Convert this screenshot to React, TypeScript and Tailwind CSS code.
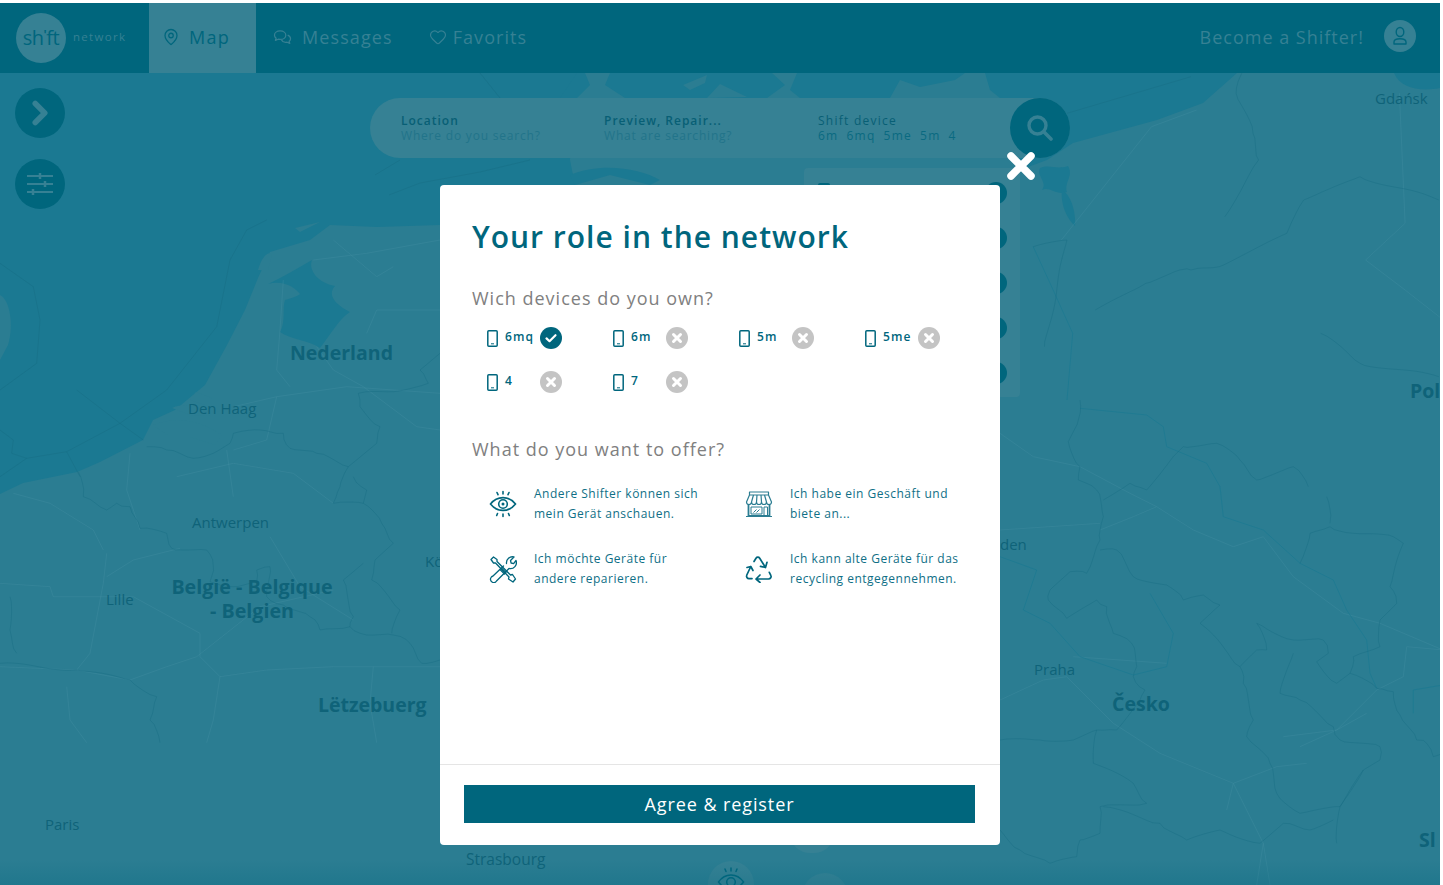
import { Heart, MapPin, ChevronRight } from "lucide-react";

const mapLabels = [
  { text: "Gdańsk", cls: "left-[1375px] top-[14px] text-[15px] font-medium" },
  { text: "Nederland", cls: "left-[290px] top-[265px] text-[19.500px] font-bold" },
  { text: "Den Haag", cls: "left-[188px] top-[324px] text-[15px]" },
  { text: "Antwerpen", cls: "left-[192px] top-[438px] text-[15px]" },
  { text: "Kö", cls: "left-[425px] top-[477px] text-[15px]" },
  { text: "Lille", cls: "left-[106px] top-[515px] text-[15px]" },
  { text: "Lëtzebuerg", cls: "left-[318px] top-[617px] text-[19.500px] font-bold" },
  { text: "Paris", cls: "left-[45px] top-[740px] text-[15px]" },
  { text: "Strasbourg", cls: "left-[466px] top-[775px] text-[15.500px]" },
  { text: "den", cls: "left-[1000px] top-[460px] text-[15px]" },
  { text: "Praha", cls: "left-[1034px] top-[585px] text-[15px]" },
  { text: "Česko", cls: "left-[1112px] top-[616px] text-[19.500px] font-bold" },
  { text: "Pol", cls: "left-[1410px] top-[303px] text-[19.500px] font-bold" },
  { text: "Sl", cls: "left-[1419px] top-[752px] text-[19.500px] font-bold" },
];

type Pt = number[];

// coordinates read off the 3x crops, converted back to page pixels
const west = (p: Pt[]) => p.map(([x, y]) => [x / 3, y / 3 + 220]);
const east = (p: Pt[]) => p.map(([x, y]) => [x / 3 + 1000, y / 3 + 400]);
const north = (p: Pt[]) => p.map(([x, y]) => [x / 1.775 + 560, y / 3]);

const line = (p: Pt[]) => "M" + p.map(([x, y]) => `${x.toFixed(1)} ${y.toFixed(1)}`).join("L");

// small fixed wobble so that borders look hand-traced and not straight
function jagged(p: Pt[]) {
  const out: Pt[] = [];
  let n = 0;
  for (let i = 0; i < p.length - 1; i++) {
    const [x1, y1] = p[i];
    const [x2, y2] = p[i + 1];
    const steps = Math.max(1, Math.round(Math.hypot(x2 - x1, y2 - y1) / 6));
    for (let s = 0; s < steps; s++) {
      const t = s / steps;
      n++;
      const off = s === 0 ? 0 : Math.sin(n * 12.9898) * 1.6;
      out.push([x1 + (x2 - x1) * t + off, y1 + (y2 - y1) * t - off * 0.8]);
    }
  }
  out.push(p[p.length - 1]);
  return line(out);
}

const borders = [
  west([[235,755],[250,830],[320,870],[350,850],[390,860],[420,925],[500,940],[515,985],[620,990],[640,1040],[630,1085],[700,1100],[770,1085],[770,1050],[810,1040],[800,1130],[850,1155],[930,1190],[960,1230],[1050,1220],[1100,1245],[1180,1245],[1230,1270],[1265,1330],[1320,1320]]),
  west([[440,680],[500,690],[580,715],[640,700],[690,670],[700,640],[780,630],[850,640],[870,685],[950,700],[1045,740],[1020,800],[1000,850],[1090,850],[1100,810],[1060,770]]),
  west([[1045,740],[1130,670],[1140,620],[1080,560],[1075,520],[1180,515],[1285,490],[1260,450],[1320,400]]),
  west([[1090,850],[1145,910],[1180,970],[1125,1020],[1115,1080],[1200,1170],[1175,1240]]),
  west([[1090,1030],[1030,1080],[1060,1190],[1050,1220]]),
  west([[0,1330],[230,1350],[390,1380],[470,1430],[450,1500],[480,1568]]),
  west([[30,1130],[30,1230],[50,1300]]),
  east([[240,0],[235,60],[205,125],[240,200],[235,240],[290,270],[310,350],[300,420],[260,520],[210,515],[150,570],[145,600],[200,655],[290,600],[320,620],[340,700],[395,730],[410,800],[400,830],[435,870],[420,900],[350,990],[290,990],[280,1090],[400,1150],[440,1210],[300,1220],[300,1300],[240,1320],[230,1370],[150,1390],[60,1350],[0,1290]]),
  east([[300,450],[350,450],[400,530],[500,555],[550,600],[610,585],[660,615],[600,670],[720,800],[770,750],[800,750],[770,670],[880,720],[970,720],[985,760],[950,785],[1010,850],[1050,820],[1130,865],[1180,875],[1200,945],[1250,1020],[1280,1030],[1300,1070],[1329,1060]]),
  east([[720,800],[730,850],[760,960],[740,1010],[770,1040],[810,1090],[830,1180],[900,1240],[1020,1220],[1090,1110],[1140,1080],[1140,1040],[1020,1020],[1000,980],[900,900],[840,880],[880,760]]),
  east([[900,490],[930,400],[990,380],[1060,400],[1180,410],[1210,430],[1170,560],[1190,610],[1140,660],[1140,740],[1060,770],[1050,820]]),
  east([[980,290],[990,370]]),
  east([[925,260],[880,200],[770,240],[720,180],[650,130],[550,140],[520,170],[440,270],[390,250],[310,300]]),
  east([[0,1020],[120,1020],[220,1020],[290,990]]),
  east([[310,1220],[480,1270],[560,1320],[660,1290],[780,1330],[850,1270],[930,1290],[1000,1260]]),
  east([[1090,1110],[1020,1220],[1010,1330]]),
  north([[1180,650],[1240,480],[1230,400],[1200,280],[1210,220]]),
  north([[950,930],[1040,850],[1100,810],[1120,810],[1170,800],[1290,700],[1320,600],[1420,530],[1560,600]]),
  north([[1350,1000],[1420,1090],[1560,1130]]),
  north([[840,740],[900,720],[860,1040]]),
];

// dark lines across the sea and the big rivers
const seaLines = [
  west([[0,510],[110,430],[120,300],[100,200],[0,130]]),
  west([[0,770],[80,715],[200,695],[360,610],[500,510],[650,320],[690,120],[740,30],[800,0]]),
  west([[230,510],[360,610],[430,660]]),
  west([[200,695],[240,770]]),
  west([[0,630],[40,660],[35,700],[80,715]]),
  north([[1120,230],[900,340]]),
  [[389,195],[420,183],[480,172],[530,160]],
  [[480,73],[500,98]],
  [[375,175],[400,160]],
];
const rivers = [
  east([[240,25],[440,45],[490,80],[500,140],[620,190],[660,260],[670,350],[790,390],[900,490],[1000,540],[1040,630],[1100,720],[1110,820],[1130,865]]),
  east([[450,580],[520,700],[500,800],[400,825],[240,770],[150,670],[70,630],[110,510],[0,470]]),
  east([[1240,940],[1240,870],[1329,855]]),
  north([[840,740],[870,850],[910,1000],[900,1200]]),
];

const roads = [
  west([[320,1000],[310,1090],[270,1300],[230,1350]]),
  west([[320,1070],[400,1020],[540,985]]),
  west([[0,1090],[150,1100],[160,1130],[400,1130],[600,1240],[600,1310],[660,1370],[800,1350],[1000,1340],[1320,1340]]),
  west([[590,1310],[780,1160],[1000,1110]]),
  west([[40,820],[150,850],[280,930],[310,990]]),
  west([[390,700],[380,810],[420,930]]),
  west([[680,690],[700,830]]),
  west([[530,770],[700,730],[880,760],[1000,850]]),
  west([[830,530],[800,660],[700,690]]),
  west([[700,560],[830,530],[1040,500],[1320,520]]),
  west([[850,180],[840,330],[830,450],[870,500]]),
  west([[940,120],[1100,100],[1320,60]]),
  west([[950,380],[1000,450],[1090,500],[1250,620],[1320,630]]),
  west([[1000,60],[1130,170],[1180,140]]),
  west([[1100,340],[1130,270],[1320,270]]),
  west([[0,1340],[230,1350],[390,1380],[500,1340],[590,1310]]),
  west([[200,1400],[210,1500],[260,1568]]),
  west([[660,1370],[640,1500],[620,1568]]),
  west([[1120,1340],[1110,1450],[1130,1568]]),
  west([[810,950],[900,1100],[1060,1200]]),
  east([[0,100],[100,170],[240,200],[390,280],[470,320],[580,390],[700,440],[790,410],[880,530],[1030,640],[1140,670],[1329,750]]),
  east([[300,390],[400,350],[470,320]]),
  east([[0,390],[300,370]]),
  east([[220,770],[500,790]]),
  east([[0,900],[130,840],[200,830],[340,970],[480,1060],[700,1150],[830,1100],[920,1090]]),
  east([[700,1150],[790,1330],[810,1455]]),
  east([[700,1150],[680,1230]]),
  east([[790,1330],[770,1455]]),
  east([[1130,870],[1010,990],[900,1040]]),
  east([[850,1010],[1010,990],[1100,940]]),
  east([[1329,750],[1220,740],[1210,830],[1130,870]]),
  north([[890,720],[1050,380],[1130,330]]),
  north([[1490,280],[1500,670],[1430,780],[1500,870],[1568,960]]),
];

function PhoneIcon() {
  return (
    <svg viewBox="0 0 11 17" className="h-[17px] w-[11px] shrink-0" fill="none" stroke="#00667d">
      <rect x="0.800" y="0.800" width="9.400" height="15.400" rx="1" strokeWidth="1.500" />
      <path d="M4 13.800h3" strokeWidth="1" />
    </svg>
  );
}

function StatusIcon({ on }: { on: boolean }) {
  return (
    <svg viewBox="0 0 22 22" className="h-[22px] w-[22px] shrink-0">
      <circle cx="11" cy="11" r="11" fill={on ? "#00667d" : "#c4c4c4"} />
      {on ? (
        <path d="M6.500 11.400l3 2.800 6-6" fill="none" stroke="#fff" strokeWidth="2.200" strokeLinecap="round" strokeLinejoin="round" />
      ) : (
        <path d="M7.500 7.500l7 7M14.500 7.500l-7 7" fill="none" stroke="#fff" strokeWidth="3" strokeLinecap="round" />
      )}
    </svg>
  );
}

function EyeIcon() {
  return (
    <svg viewBox="0 0 28 28" className="h-[28px] w-[28px]" fill="none" stroke="#00667d" strokeWidth="1.600" strokeLinecap="round">
      <path d="M1.500 14C5 9.500 9 7.600 14 7.600S23 9.500 26.500 14C23 18.500 19 20.400 14 20.400S5 18.500 1.500 14Z" />
      <circle cx="14" cy="14" r="4.300" />
      <circle cx="14" cy="14" r="1.500" fill="#00667d" stroke="none" />
      <path d="M14 1.500v2.500M8 2.500l1 2.200M20 2.500l-1 2.200M14 24v2.500M8.500 23.500l-.8 2M19.500 23.500l.8 2" />
    </svg>
  );
}

function ToolsIcon() {
  return (
    <svg viewBox="0 0 28 28" className="h-[28px] w-[28px]" fill="none" stroke="#00667d" strokeWidth="1.300" strokeLinejoin="round" strokeLinecap="round">
      <path d="M2 4.500L4.500 2 8 4.500v2l13.500 13.500 2-.5 3 4.500-2.500 3-4.500-3 .5-2L6.500 8H4.500Z" />
      <path d="M17.500 8.500a6 6 0 0 1 7.500-6.500L21.500 5.500l.6 2.500 2.500.6L27 5.500a6 6 0 0 1-7 8L7.500 26a3.200 3.200 0 0 1-5.500-3.500 3.200 3.200 0 0 1 2-1.500L14.500 11" />
      <path d="M11.500 15l4 4M13 13.500l4 4" />
    </svg>
  );
}

function StoreIcon() {
  return (
    <svg viewBox="0 0 28 28" className="h-[28px] w-[28px]" fill="none" stroke="#2b7d92" strokeWidth="1.200" strokeLinejoin="round">
      <path d="M4.500 2h19v3h-19ZM4.500 5L1.500 12a2.500 2.500 0 0 0 5 0 2.500 2.500 0 0 0 5 0 2.500 2.500 0 0 0 5 0 2.500 2.500 0 0 0 5 0 2.500 2.500 0 0 0 5 0L23.500 5" />
      <path d="M8.500 5L6.500 12M12 5l-.5 7M16 5l.5 7M19.500 5l2 7" />
      <path d="M3.500 15v11h21V15" strokeWidth="1.800" />
      <path d="M6 17h11v7H6ZM19 17h3.500v9H19ZM8.500 22.500l3-3M11.500 22.500l3-3" strokeWidth="1" />
      <path d="M1 26.500h26" strokeWidth="1" />
    </svg>
  );
}

function RecycleIcon() {
  return (
    <svg viewBox="0 0 28 28" className="h-[28px] w-[28px]" fill="none" stroke="#00667d" strokeWidth="1.700" strokeLinecap="round" strokeLinejoin="round">
      <path d="M9 6.500l2-3.300c.9-1.400 2.800-1.400 3.700 0l5.800 9.300M15.500 11.300l5 1.200 1.500-5.200" />
      <path d="M5.800 11.500L1.800 20c-.8 1.700.4 3.600 2.200 3.600h3M2 12.500l3.800-1L8 15.500" />
      <path d="M11.500 24h12c2 0 3.200-2 2.300-3.700l-1.500-3M15 20l-4 4 4 3.500" />
    </svg>
  );
}

const devices = [
  { name: "6mq", on: true },
  { name: "6m", on: false },
  { name: "5m", on: false },
  { name: "5me", on: false },
  { name: "4", on: false },
  { name: "7", on: false },
];

const offers = [
  { icon: <EyeIcon />, lines: ["Andere Shifter können sich", "mein Gerät anschauen."] },
  { icon: <StoreIcon />, lines: ["Ich habe ein Geschäft und", "biete an..."] },
  { icon: <ToolsIcon />, lines: ["Ich möchte Geräte für", "andere reparieren."] },
  { icon: <RecycleIcon />, lines: ["Ich kann alte Geräte für das", "recycling entgegennehmen."] },
];

function MapBackground() {
  return (
    <svg viewBox="0 73 1440 812" className="absolute inset-0 h-full w-full blur-[0.4px]">
      <rect x="0" y="73" width="1440" height="812" fill="#2b7d92" />
      {/* north sea */}
      <path
        d="M0 73H577L570 160 575 185 560 225H440L377 227 330 225 310 240 270 252 258 278 245 310 227 345 205 385 175 410 153 420 143 440 100 462 77 472 23 483 0 494Z"
        fill="#1b7992"
      />
      <path d="M0 295C10 300 14 325 8 345L0 360Z" fill="#2b7d92" />
      <path d="M153 425C175 416 200 420 222 435L215 445 190 437 170 437Z" fill="#2b7d92" />
      <path d="M172 408C190 400 205 410 210 416L190 415ZM196 392L212 398 205 405 190 400Z" fill="#2b7d92" />
      <path d="M258 270C262 255 270 250 272 255L268 270ZM295 228L320 222 300 232Z" fill="#2b7d92" />
      {/* ijsselmeer */}
      <path d="M268 284C285 276 298 268 312 260C308 270 318 283 335 286C326 296 338 306 350 312C340 318 330 335 320 348C308 340 292 340 280 332C286 322 282 308 285 300C292 298 298 296 300 294C294 286 282 280 268 284Z" fill="#1b7992" />
      {/* baltic, with the land patches that show above the search bar */}
      <path d="M577 73H1237L1203 103 1157 120 1073 143 1047 160 1020 170 960 100 800 98 560 98Z" fill="#1b7992" />
      <path d="M577 98L590 85 585 73H610L605 85 625 98ZM683 85L707 75 705 83 690 90ZM707 98L720 84 747 97ZM767 98L785 85 772 73H797L790 90 800 98H767ZM890 98L900 80 920 87 955 80 965 73H985L990 90 1000 98Z" fill="#2b7d92" />
      <path d="M1040 168C1050 164 1056 170 1068 166C1074 176 1064 182 1067 192C1056 196 1050 186 1042 190C1048 182 1036 176 1040 168Z" fill="#1b7992" />
      <path d="M1062 190C1070 194 1076 210 1075 226C1068 220 1060 205 1062 190Z" fill="#1b7992" />
      <path d="M1394 73H1440V88C1420 92 1400 88 1394 73Z" fill="#1b7992" />
      <path d="M570 175C600 162 640 168 660 180L650 185 610 175 575 185Z" fill="#1b7992" />
      <g fill="none" stroke="#4a92a5" strokeOpacity="0.3" strokeWidth="1" strokeLinejoin="round">
        {roads.map((p, i) => (
          <path key={i} d={line(p)} />
        ))}
      </g>
      <g fill="none" stroke="#1b7992" strokeOpacity="0.7" strokeWidth="1" strokeLinejoin="round">
        {rivers.map((p, i) => (
          <path key={i} d={line(p)} />
        ))}
      </g>
      <g fill="none" stroke="#176c83" strokeOpacity="0.5" strokeWidth="0.800" strokeLinejoin="round">
        {seaLines.map((p, i) => (
          <path key={i} d={line(p)} />
        ))}
        {borders.map((p, i) => (
          <path key={i} d={jagged(p)} />
        ))}
      </g>
    </svg>
  );
}

export default function App() {
  return (
    <div className="relative h-[885px] w-[1443px] overflow-hidden bg-white pt-[3px] pr-[3px] font-['Open_Sans',sans-serif]">
      <header className="relative z-10 flex h-[70px] items-center bg-[#00667d] pb-[2px] text-[#368194]">
        <div className="flex w-[149px] items-center pl-[16px]">
          <div className="flex h-[50px] w-[50px] translate-y-[1px] items-center justify-center rounded-full bg-[#368194] text-[20px] tracking-[-0.5px] text-[#00667d]">
            sh<span className="relative top-[-3px] text-[12px] font-bold">'</span>ft
          </div>
          <span className="ml-[7px] text-[11.500px] tracking-[1.300px]">network</span>
        </div>
        <div className="-mb-[2px] flex h-[70px] w-[107px] items-center bg-[#368194] pl-[13px] pb-[2px] text-[#00667d]">
          <MapPin size={18} strokeWidth={1.700} />
          <span className="ml-[9px] text-[18px] tracking-[1.300px]">Map</span>
        </div>
        <div className="ml-[17px] flex items-center">
          <svg viewBox="0 0 20 18" className="h-[17px] w-[19px]" fill="none" stroke="#368194" strokeWidth="1.300" strokeLinejoin="round">
            <path d="M7.500 2C4 2 1.500 4 1.500 6.500c0 1.300.7 2.400 1.800 3.200L2.500 12l3-1.200c.7.200 1.300.2 2 .2 3.500 0 6-2 6-4.500S11 2 7.500 2Z" />
            <path d="M15.500 6.500c1.800.7 3 2 3 3.700 0 1.100-.6 2.100-1.500 2.800l.7 2.200-2.800-1.200c-2.500.5-5-.5-6-2.500" />
          </svg>
          <span className="ml-[10px] text-[18px] tracking-[1.100px]">Messages</span>
        </div>
        <div className="ml-[36px] flex items-center">
          <Heart size={18} strokeWidth={1.500} />
          <span className="ml-[6px] text-[18px] tracking-[1.050px]">Favorits</span>
        </div>
        <div className="ml-auto flex items-center pr-[24px]">
          <span className="text-[18px] tracking-[1px]">Become a Shifter!</span>
          <div className="ml-[20px] flex h-[32px] w-[32px] -translate-y-[1px] items-center justify-center rounded-full bg-[#368194]">
            <svg viewBox="0 0 18 20" className="h-[20px] w-[18px]" fill="none" stroke="#00667d" strokeWidth="1.400">
              <ellipse cx="9" cy="6" rx="3.800" ry="4.500" />
              <path d="M3 18h12v-2c0-2-2-3.200-6-3.200S3 14 3 16Z" strokeLinejoin="round" />
            </svg>
          </div>
        </div>
      </header>

      <main className="relative h-[812px] overflow-hidden">
        <MapBackground />
        {mapLabels.map((l) => (
          <span key={l.text} className={`absolute whitespace-nowrap text-[#0f6379] ${l.cls}`}>
            {l.text}
          </span>
        ))}
        <div className="absolute left-[169px] top-[502px] w-[166px] text-center text-[19.700px] font-bold leading-[24px] text-[#0f6379]">
          België - Belgique - Belgien
        </div>

        <div className="absolute left-[15px] top-[15px] flex flex-col gap-[21px]">
          <div className="flex h-[50px] w-[50px] items-center justify-center rounded-full bg-[#00667d] text-[#368194]">
            <ChevronRight size={38} strokeWidth={3.500} />
          </div>
          <div className="flex h-[50px] w-[50px] items-center justify-center rounded-full bg-[#00667d]">
            <svg viewBox="0 0 26 22" className="h-[22px] w-[26px]" stroke="#368194" strokeWidth="2">
              <path d="M0 3h26M0 11h26M0 19h26" />
              <path d="M13 0v6M18 8v6M6 16v6" strokeWidth="2.500" />
            </svg>
          </div>
        </div>

        {/* search bar */}
        <div className="absolute left-[370px] top-[25px] flex h-[60px] w-[700px] items-center rounded-full bg-[#368194] text-[12px] leading-[15px]">
          <div className="w-[234px] pl-[31px] tracking-[0.800px]">
            <div className="font-semibold tracking-[1px] text-[#085f75]">Location</div>
            <div className="text-[#22748a]">Where do you search?</div>
          </div>
          <div className="w-[214px] tracking-[0.800px]">
            <div className="font-semibold tracking-[1px] text-[#085f75]">Preview, Repair...</div>
            <div className="text-[#22748a]">What are searching?</div>
          </div>
          <div className="tracking-[1.250px]">
            <div className="font-medium text-[#085f75]">Shift device</div>
            <div className="font-medium text-[#0a6a81]">
              <span>6m</span>
              <span className="ml-[8px]">6mq</span>
              <span className="ml-[8px]">5me</span>
              <span className="ml-[8px]">5m</span>
              <span className="ml-[8px]">4</span>
            </div>
          </div>
          <div className="absolute right-0 top-0 flex h-[60px] w-[60px] items-center justify-center rounded-full bg-[#00667d]">
            <svg viewBox="0 0 26 26" className="h-[26px] w-[26px]" fill="none" stroke="#368194" strokeLinecap="round">
              <circle cx="10.500" cy="10.500" r="8.500" strokeWidth="3.400" />
              <path d="M17 17l7 7" strokeWidth="3.600" />
            </svg>
          </div>
        </div>

        {/* device dropdown, mostly behind the modal */}
        <div className="absolute left-[804px] top-[95px] flex h-[229px] w-[216px] flex-col items-end gap-[23px] rounded-[4px] bg-[#368194] pr-[13px] pt-[14px]">
          <div className="absolute left-[14px] top-[15px] h-[18px] w-[12px] rounded-[2px] bg-[#00667d]" />
          {[0, 1, 2, 3, 4].map((i) => (
            <div key={i} className="h-[22px] w-[22px] shrink-0 rounded-full bg-[#00667d]" />
          ))}
        </div>

        {/* pins at the bottom edge */}
        <div className="absolute left-[708px] top-[788px] flex h-[46px] w-[46px] justify-center rounded-full bg-[#368194] pt-[3px]">
          <svg viewBox="0 0 28 28" className="h-[28px] w-[28px]" fill="none" stroke="#00667d" strokeWidth="1.500" strokeLinecap="round">
            <path d="M1.500 18C5 13 9 11 14 11S23 13 26.500 18C23 23 19 25 14 25S5 23 1.500 18Z" />
            <circle cx="14" cy="18" r="4.300" />
            <path d="M14 4v3M8 5l1 2.500M20 5l-1 2.500" />
          </svg>
        </div>
        <div className="absolute left-[802px] top-[800px] h-[46px] w-[46px] rounded-full bg-[#368194]" />
        <div className="absolute left-[790px] top-[740px] h-[40px] w-[44px] rounded-full bg-[#368194]" />
        <div className="absolute inset-x-0 bottom-0 h-[25px] bg-gradient-to-b from-transparent to-[#00667d]/25" />

        {/* modal */}
        <div className="absolute left-[440px] top-[112px] z-10 flex h-[660px] w-[560px] flex-col rounded-[4px] bg-white text-[#00667d]">
          <svg viewBox="0 0 30 30" className="absolute right-[-36px] top-[-34px] h-[30px] w-[30px]" stroke="#fff" strokeWidth="7.500" strokeLinecap="round">
            <path d="M5 5l20 20M25 5L5 25" />
          </svg>
          <div className="flex-1 px-[32px] pt-[30px]">
            <h1 className="text-[30px] font-semibold leading-[44px] tracking-[1px]">Your role in the network</h1>
            <h2 className="mt-[27px] text-[18px] leading-[24px] tracking-[1px] text-[#808080]">Wich devices do you own?</h2>
            <div className="mt-[17px] grid grid-cols-[126px_126px_126px_126px] gap-y-[22px] pl-[15px]">
              {devices.map((d) => (
                <div key={d.name} className="flex h-[22px] items-center">
                  <PhoneIcon />
                  <span className="ml-[7px] w-[35px] -translate-y-[1px] text-[12px] font-[550] tracking-[1.150px]">{d.name}</span>
                  <StatusIcon on={d.on} />
                </div>
              ))}
            </div>
            <h2 className="mt-[44px] text-[18px] leading-[24px] tracking-[1px] text-[#808080]">What do you want to offer?</h2>
            <div className="mt-[23px] grid grid-cols-[256px_230px] gap-y-[25px] pl-[17px]">
              {offers.map((o) => (
                <div key={o.lines[0]} className="flex items-center">
                  <div className="w-[45px] shrink-0">{o.icon}</div>
                  <p className="whitespace-nowrap text-[12px] leading-[20px] tracking-[0.500px] text-[#0f6f86]">
                    {o.lines[0]}
                    <br />
                    {o.lines[1]}
                  </p>
                </div>
              ))}
            </div>
          </div>
          <div className="h-[81px] border-t border-[#e5e5e5] pl-[24px] pt-[20px]">
            <button className="h-[38px] w-[511px] bg-[#00667d] pt-[1px] text-[18px] tracking-[0.900px] text-white">Agree &amp; register</button>
          </div>
        </div>
      </main>
    </div>
  );
}
